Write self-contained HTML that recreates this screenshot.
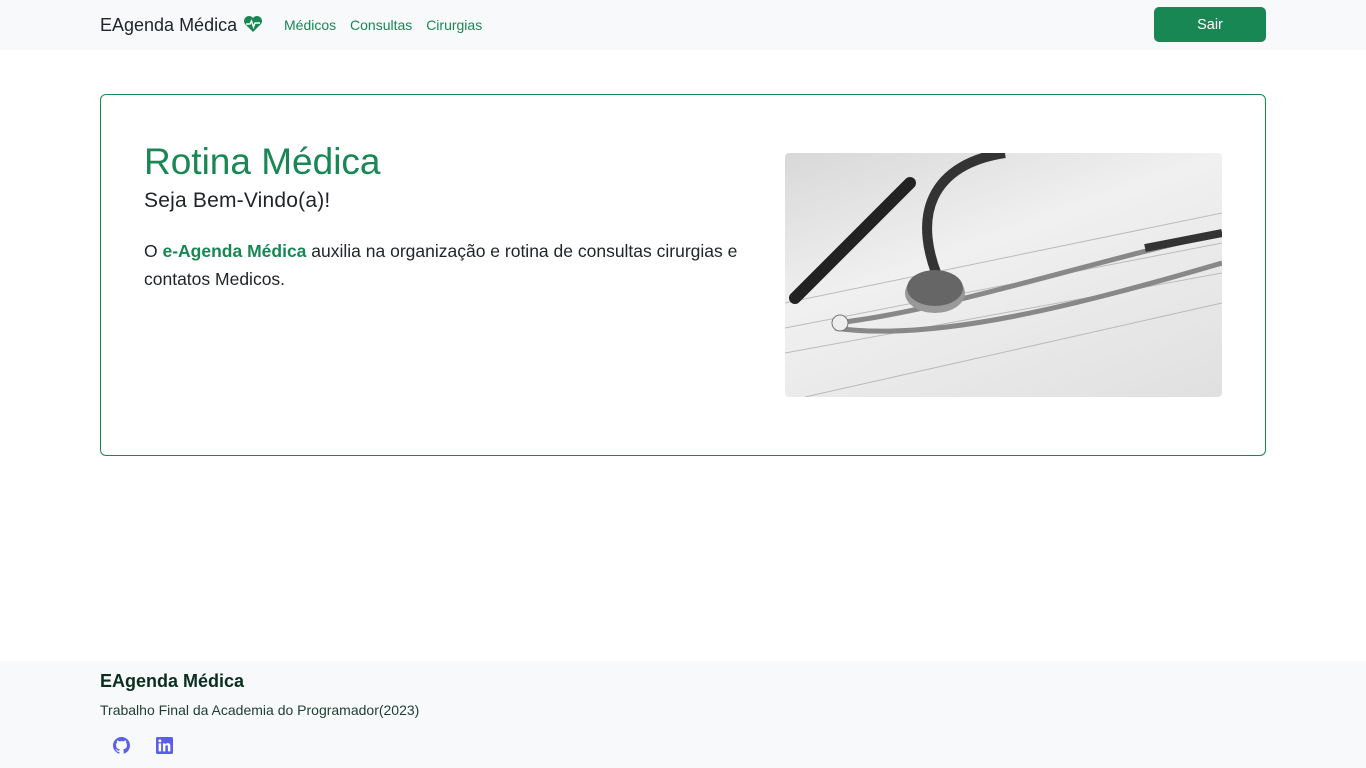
<!DOCTYPE html>
<html><head><meta charset="utf-8"><style>
*{box-sizing:border-box;margin:0;padding:0}
body{width:1366px;height:768px;background:#fff;font-family:"Liberation Sans",sans-serif;position:relative;overflow:hidden;color:#212529}
.nav{position:absolute;top:0;left:0;width:1366px;height:50px;background:#f8f9fa}
.brand{position:absolute;left:100px;top:15px;font-size:18px;color:#212529}
.heart{position:absolute;left:243px;top:15px}
.links{position:absolute;left:284px;top:17px;font-size:14px;color:#198754}
.links span{margin-right:10px}
.btn{position:absolute;left:1154px;top:7px;width:112px;height:35px;background:#198754;border-radius:5px;color:#fff;font-size:14.5px;text-align:center;line-height:36px}
.card{position:absolute;left:100px;top:94px;width:1166px;height:362px;border:1px solid #198754;border-radius:6px}
h1{position:absolute;left:144px;top:141px;font-size:37px;font-weight:normal;color:#198754}
h2{position:absolute;left:144px;top:189px;font-size:21px;font-weight:normal;color:#212529;letter-spacing:0.2px}
p.t{position:absolute;left:144px;top:237px;width:620px;font-size:17.5px;line-height:28px}
p.t b{color:#198754}
.img{position:absolute;left:785px;top:153px;width:437px;height:244px;border-radius:4px;overflow:hidden;background:linear-gradient(160deg,#d8d8d8,#f0f0f0 40%,#e0e0e0)}
.foot{position:absolute;top:661px;left:0;width:1366px;height:107px;background:#f8f9fa}
.fb{position:absolute;left:100px;top:671px;font-size:18px;font-weight:bold;color:#0b2e1f}
.fs{position:absolute;left:100px;top:702px;font-size:14px;color:#1f3d30}
</style></head><body>
<div style="position:absolute;top:0;left:563px;width:48px;height:2px;background:#0d6efd"></div>
<div style="position:absolute;top:0;left:611px;width:193px;height:1px;background:#222"></div>
<div class="nav"></div>
<div class="brand">EAgenda Médica</div>
<svg class="heart" width="20" height="18" viewBox="0 0 20 18"><path d="M10 17 L2 9 A5 5 0 0 1 10 3 A5 5 0 0 1 18 9 Z" fill="#198754"/><path d="M3 9 H7 L8.5 6 L10.5 12 L12 8 H17" stroke="#fff" stroke-width="1.4" fill="none"/></svg>
<div class="links"><span>Médicos</span> <span>Consultas</span> <span>Cirurgias</span></div>
<div class="btn">Sair</div>
<div class="card"></div>
<h1>Rotina Médica</h1>
<h2>Seja Bem-Vindo(a)!</h2>
<p class="t">O <b>e-Agenda Médica</b> auxilia na organização e rotina de consultas cirurgias e contatos Medicos.</p>
<div class="img"><svg width="437" height="244" viewBox="0 0 437 244">
<g stroke="#bbb" stroke-width="1"><line x1="0" y1="150" x2="437" y2="60"/><line x1="0" y1="175" x2="437" y2="90"/><line x1="0" y1="200" x2="437" y2="120"/><line x1="20" y1="244" x2="437" y2="150"/></g>
<path d="M10 145 L125 30" stroke="#222" stroke-width="12" stroke-linecap="round"/>
<path d="M160 140 C120 60 150 10 220 0" stroke="#333" stroke-width="10" fill="none"/>
<path d="M50 170 C150 160 300 110 437 80" stroke="#888" stroke-width="5" fill="none"/>
<path d="M50 175 C150 190 300 150 437 110" stroke="#888" stroke-width="5" fill="none"/>
<ellipse cx="150" cy="140" rx="30" ry="20" fill="#999"/><ellipse cx="150" cy="135" rx="28" ry="18" fill="#666"/>
<path d="M360 95 L437 80" stroke="#333" stroke-width="8"/>
<circle cx="55" cy="170" r="8" fill="#eee" stroke="#777"/>
</svg></div>
<div class="foot"></div>
<div class="fb">EAgenda Médica</div>
<div class="fs">Trabalho Final da Academia do Programador(2023)</div>
<svg style="position:absolute;left:113px;top:737px" width="17" height="17" viewBox="0 0 16 16"><path fill="#5b5fe8" d="M8 0C3.580 0 0 3.58 0 8c0 3.54 2.29 6.53 5.47 7.59.4.07.55-.17.55-.38v-1.33c-2.23.48-2.7-1.07-2.7-1.070-.36-.92-.89-1.17-.89-1.17-.73-.5.06-.49.06-.49.8.06 1.23.83 1.23.83.71 1.22 1.870.87 2.33.66.07-.52.28-.87.5-1.07-1.78-.2-3.64-.89-3.64-3.95 0-.87.31-1.59.82-2.150-.08-.2-.36-1.02.08-2.12 0 0 .67-.21 2.2.82a7.6 7.6 0 0 1 4 0c1.53-1.04 2.2-.82 2.2-.82.44 1.1.16 1.92.08 2.12.51.56.82 1.27.82 2.15 0 3.07-1.87 3.75-3.65 3.95.29.25.54.73.54 1.48v2.2c0 .21.15.46.55.38A8 8 0 0 0 16 8c0-4.42-3.58-8-8-8z"/></svg>
<svg style="position:absolute;left:156px;top:737px" width="17" height="17" viewBox="0 0 16 16"><rect width="16" height="16" rx="1.5" fill="#5b5fe8"/><rect x="2.5" y="6" width="2.3" height="7.5" fill="#fff"/><circle cx="3.65" cy="3.6" r="1.35" fill="#fff"/><path d="M6.5 6h2.2v1.1c.4-.7 1.2-1.3 2.4-1.3 2 0 2.4 1.3 2.4 3v4.7h-2.3V9.4c0-.9-.1-1.7-1.1-1.7s-1.3.8-1.3 1.7v4.1H6.5z" fill="#fff"/></svg>
</body></html>
